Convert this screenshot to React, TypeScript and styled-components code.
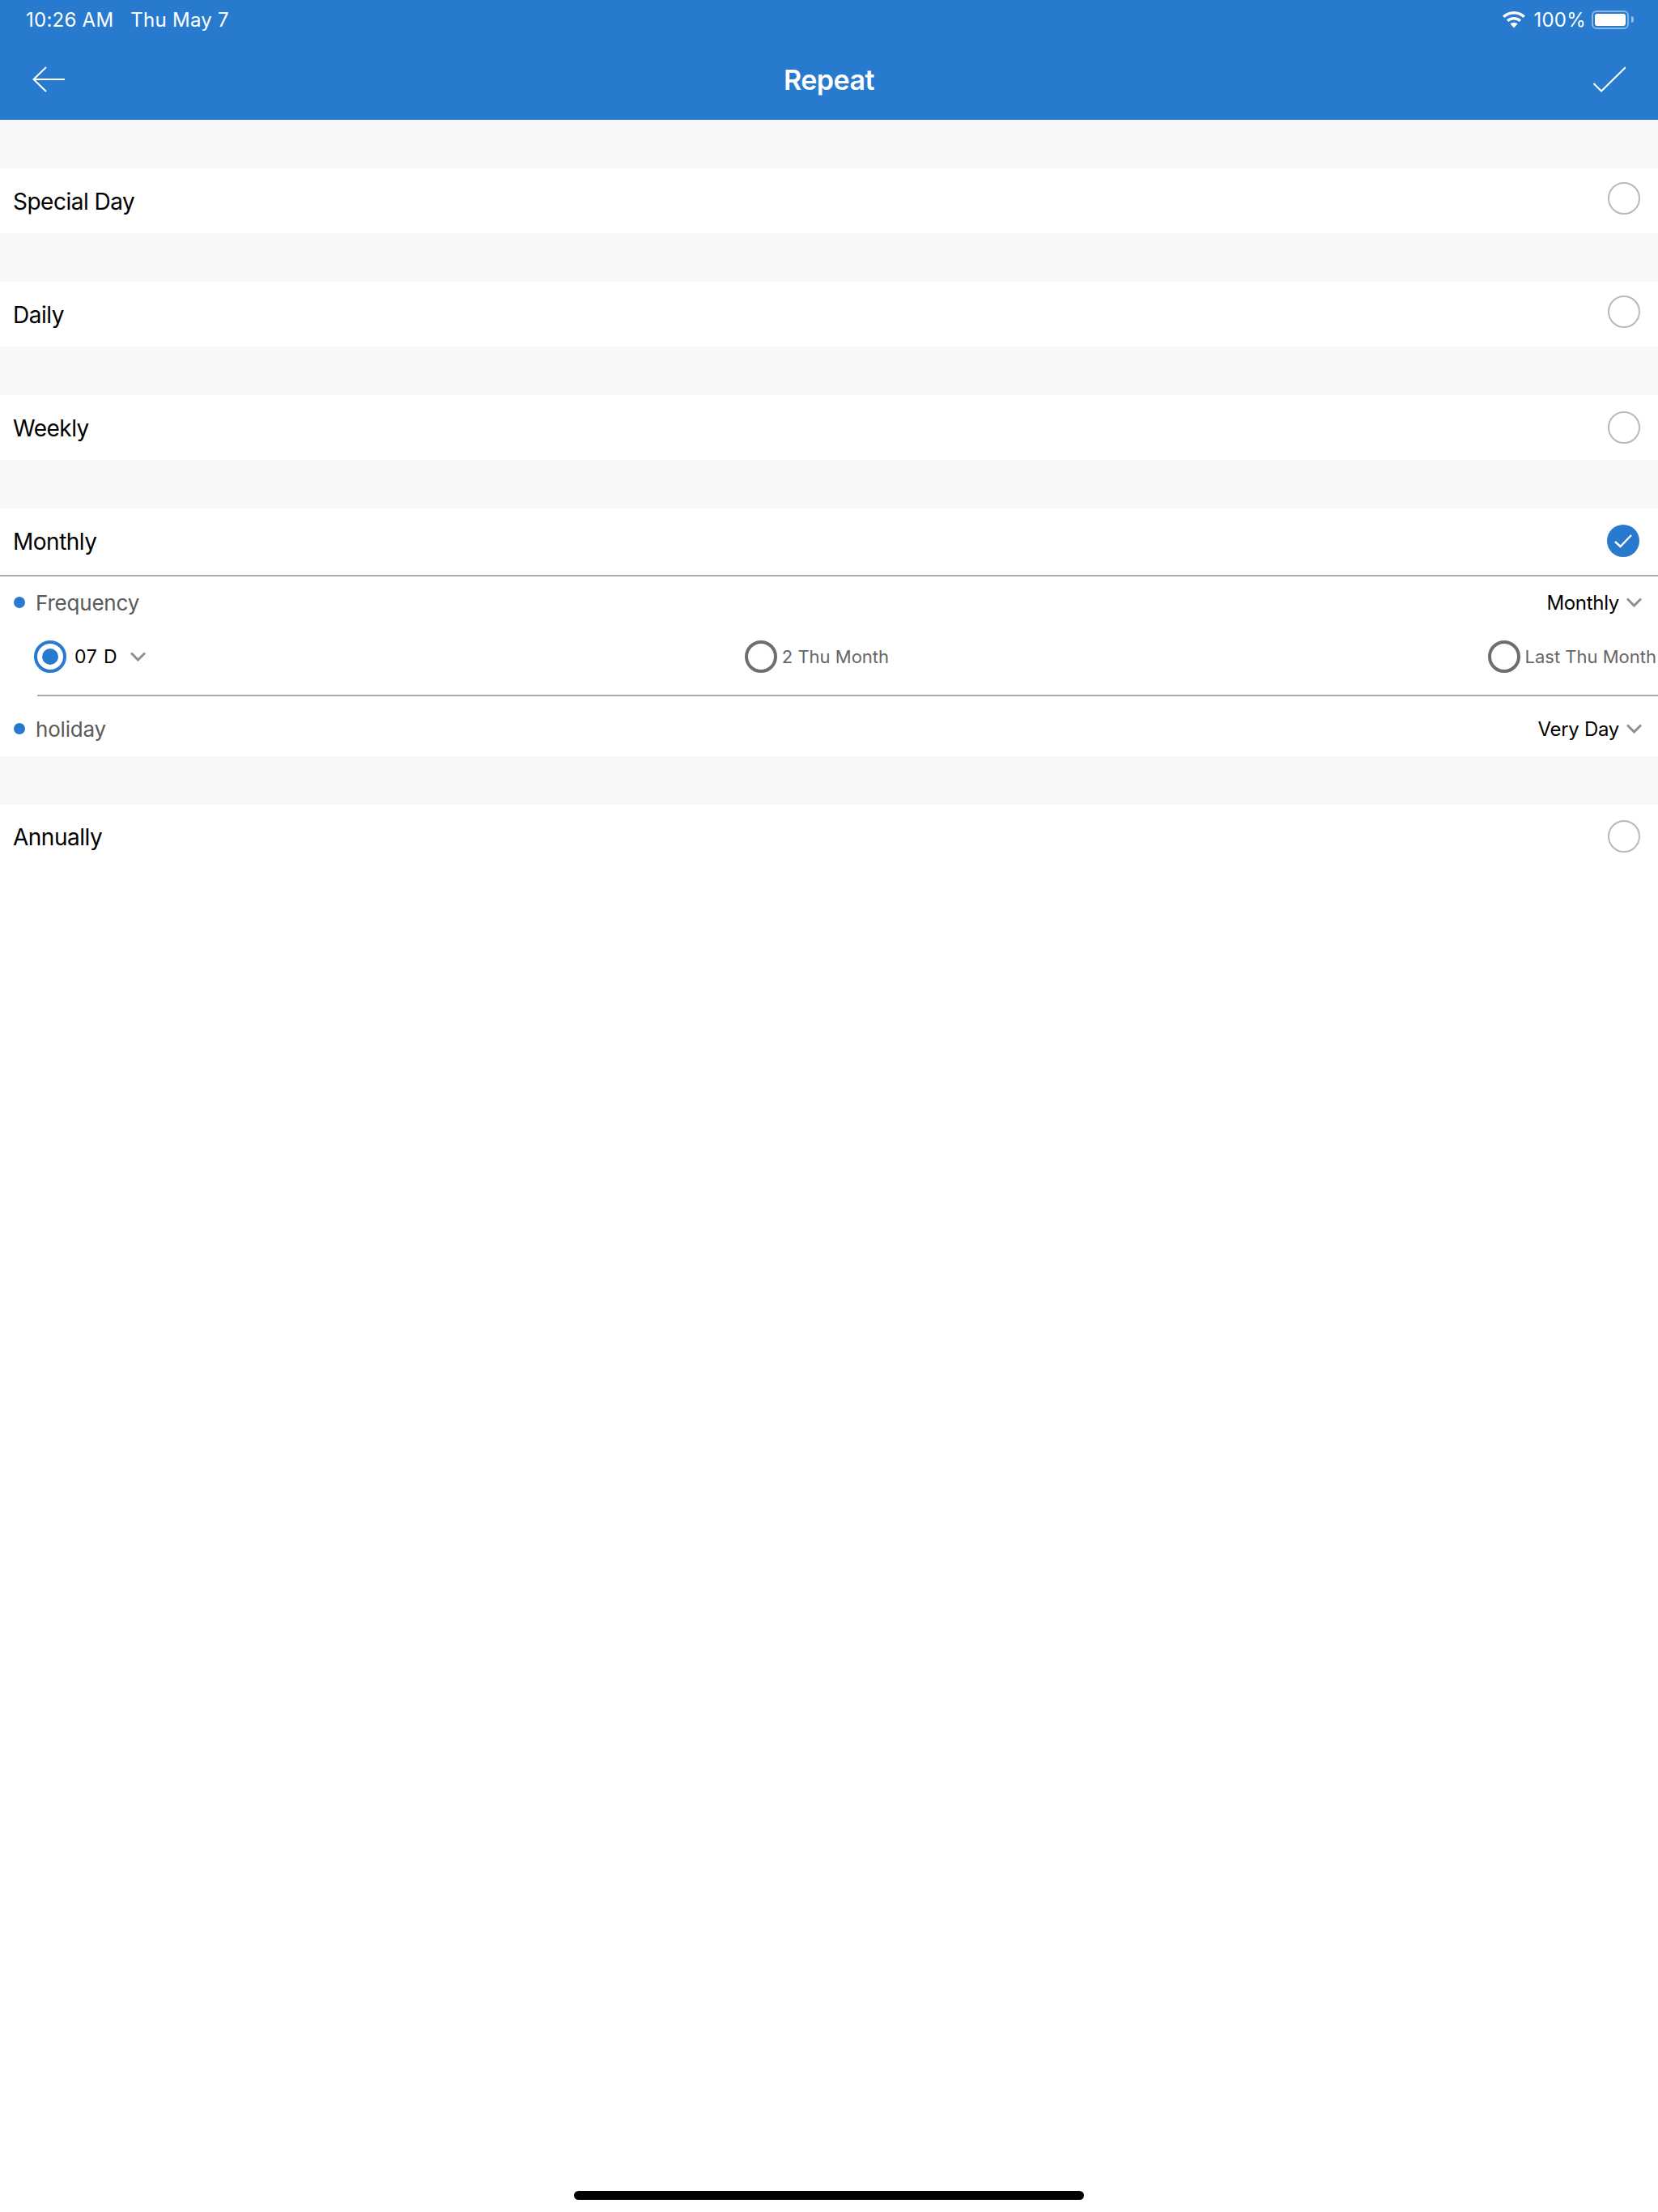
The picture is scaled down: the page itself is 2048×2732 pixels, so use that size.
import * as React from 'react';
import styled, { createGlobalStyle } from 'styled-components';

const BLUE = '#277acd';

const GlobalStyle = createGlobalStyle`
    html, body {
        margin: 0;
        padding: 0;
        background: #ffffff;
        font-family: Inter, "Noto Sans", "Liberation Sans", sans-serif;
    }
`;

const Page = styled.div`
    width: 2048px;
    height: 2732px;
    display: flex;
    flex-direction: column;
    background: #ffffff;
    overflow: hidden;
`;

const Header = styled.header`
    height: 148px;
    background: ${BLUE};
    color: #ffffff;
    display: flex;
    flex-direction: column;
`;

const StatusBar = styled.div`
    height: 48px;
    padding: 0 30px 0 32px;
    display: flex;
    align-items: center;
    justify-content: space-between;
    font-size: 24px;
    letter-spacing: 0.25px;
`;

const StatusGroup = styled.div`
    display: flex;
    align-items: center;
`;

const StatusDate = styled.span`
    margin-left: 21px;
`;

const StatusPercent = styled.span`
    margin: 0 7px 0 10px;
`;

const Battery = styled.div`
    width: 46px;
    height: 23px;
    box-sizing: border-box;
    border: 2px solid rgba(255, 255, 255, 0.45);
    border-radius: 6px;
    padding: 2px;
    display: flex;
`;

const BatteryFill = styled.div`
    flex: 1;
    background: #ffffff;
    border-radius: 3px;
`;

const BatteryNub = styled.div`
    width: 3px;
    height: 8px;
    margin-left: 3px;
    border-radius: 0 3px 3px 0;
    background: rgba(255, 255, 255, 0.5);
`;

const NavBar = styled.div`
    height: 100px;
    padding: 0 40px;
    display: flex;
    align-items: center;
    justify-content: space-between;
`;

const NavTitle = styled.h1`
    margin: 0;
    font-size: 34px;
    font-weight: 600;
    letter-spacing: -0.5px;
`;

const Gap = styled.div`
    height: 60px;
    background: #f7f7f7;
`;

const OptionRow = styled.div<{ $tall?: boolean; $ruled?: boolean }>`
    height: ${(p) => (p.$tall ? 82 : 80)}px;
    padding: 0 22px 0 16px;
    display: flex;
    align-items: center;
    justify-content: space-between;
    background: #ffffff;
    ${(p) => (p.$ruled ? 'border-bottom: 2px solid #a9a9a9;' : '')}
`;

const OptionLabel = styled.span<{ $drop: number }>`
    font-size: 28px;
    letter-spacing: -0.5px;
    color: #000000;
    padding-top: ${(p) => p.$drop}px;
`;

const EmptyCircle = styled.div<{ $lift: number }>`
    width: 40px;
    height: 40px;
    box-sizing: border-box;
    border: 2px solid #b9b9b9;
    border-radius: 50%;
    margin-bottom: ${(p) => p.$lift}px;
`;

const CheckedCircle = styled.div`
    width: 40px;
    height: 40px;
    margin: 0 1px 2px 0;
    border-radius: 50%;
    background: ${BLUE};
    display: flex;
    align-items: center;
    justify-content: center;
`;

const SettingRow = styled.div<{ $height: number; $top?: number }>`
    height: ${(p) => p.$height}px;
    box-sizing: border-box;
    padding: ${(p) => p.$top || 0}px 20px 0 17px;
    display: flex;
    align-items: center;
    justify-content: space-between;
`;

const SettingName = styled.div`
    display: flex;
    align-items: center;
    font-size: 26px;
    letter-spacing: -0.2px;
    color: #5a5a5a;
`;

const Dot = styled.span`
    width: 14px;
    height: 14px;
    border-radius: 50%;
    background: ${BLUE};
    margin-right: 13px;
`;

const SettingValue = styled.div`
    display: flex;
    align-items: center;
    font-size: 24px;
    letter-spacing: -0.3px;
    color: #000000;
`;

const Chevron = styled.svg<{ $gap: number }>`
    width: 19px;
    height: 12px;
    margin-left: ${(p) => p.$gap}px;
    fill: none;
    stroke: #8f8f8f;
    stroke-width: 3;
`;

const RadioLine = styled.div`
    height: 82px;
    box-sizing: border-box;
    padding: 0 2px 12px 42px;
    display: flex;
    align-items: center;
    justify-content: space-between;
`;

const RadioItem = styled.div`
    display: flex;
    align-items: center;
`;

const Radio = styled.div<{ $on?: boolean }>`
    width: 40px;
    height: 40px;
    box-sizing: border-box;
    border: 4px solid ${(p) => (p.$on ? BLUE : '#6e6e6e')};
    border-radius: 50%;
    display: flex;
    align-items: center;
    justify-content: center;
`;

const RadioDot = styled.div`
    width: 20px;
    height: 20px;
    border-radius: 50%;
    background: ${BLUE};
`;

const RadioText = styled.span<{ $on?: boolean }>`
    margin-left: ${(p) => (p.$on ? 10 : 6)}px;
    font-size: ${(p) => (p.$on ? 23 : 22)}px;
    letter-spacing: ${(p) => (p.$on ? 0.8 : 0)}px;
    color: ${(p) => (p.$on ? '#000000' : '#666666')};
`;

const InsetRule = styled.div`
    height: 2px;
    margin-left: 46px;
    background: #a9a9a9;
`;

const HomeBar = styled.div`
    width: 630px;
    height: 11px;
    margin: auto auto 15px;
    border-radius: 6px;
    background: #000000;
`;

const ChevronDown: React.FunctionComponent<{ gap: number }> = ({ gap }) => (
    <Chevron $gap={gap} viewBox="0 0 19 12">
        <path d="M1 1.5 L9.5 10 L18 1.5" />
    </Chevron>
);

const Option: React.FunctionComponent<{ label: string; lift: number; drop: number }> = ({ label, lift, drop }) => (
    <>
        <Gap />
        <OptionRow>
            <OptionLabel $drop={drop}>{label}</OptionLabel>
            <EmptyCircle $lift={lift} />
        </OptionRow>
    </>
);

const App: React.FunctionComponent = () => (
    <Page>
        <GlobalStyle />
        <Header>
            <StatusBar>
                <StatusGroup>
                    <span>10:26 AM</span>
                    <StatusDate>Thu May 7</StatusDate>
                </StatusGroup>
                <StatusGroup>
                    <svg width="28" height="21" viewBox="0 0 28 21" fill="#ffffff">
                        <path d="M14 0 C19.4 0 24.3 2.1 28 5.6 L25.6 8.1 C22.6 5.2 18.5 3.4 14 3.4 C9.5 3.4 5.4 5.2 2.4 8.1 L0 5.6 C3.7 2.1 8.6 0 14 0 Z" />
                        <path d="M14 7 C17.5 7 20.7 8.4 23.1 10.6 L20.7 13.1 C18.9 11.5 16.6 10.4 14 10.4 C11.4 10.4 9.1 11.5 7.3 13.1 L4.9 10.6 C7.3 8.4 10.5 7 14 7 Z" />
                        <path d="M14 13.8 C15.8 13.8 17.3 14.5 18.5 15.6 L14 20.4 L9.5 15.6 C10.7 14.5 12.2 13.8 14 13.8 Z" />
                    </svg>
                    <StatusPercent>100%</StatusPercent>
                    <Battery>
                        <BatteryFill />
                    </Battery>
                    <BatteryNub />
                </StatusGroup>
            </StatusBar>
            <NavBar>
                <svg width="40" height="32" viewBox="0 0 40 32" fill="none" stroke="#ffffff" strokeWidth="2">
                    <path d="M40 16 H1.5 M17 1 L1.5 16 L17 31" />
                </svg>
                <NavTitle>Repeat</NavTitle>
                <svg width="40" height="32" viewBox="0 0 40 32" fill="none" stroke="#ffffff" strokeWidth="2">
                    <path d="M0.5 21 L10 30.5 L40 1" />
                </svg>
            </NavBar>
        </Header>
        <Option label="Special Day" lift={6} drop={2} />
        <Option label="Daily" lift={6} drop={2} />
        <Option label="Weekly" lift={0} drop={1} />
        <Gap />
        <OptionRow $tall $ruled>
            <OptionLabel $drop={0}>Monthly</OptionLabel>
            <CheckedCircle>
                <svg width="22" height="18" viewBox="0 0 22 18" fill="none" stroke="#ffffff" strokeWidth="2.4">
                    <path d="M1 10 L7.5 16 L21 2" />
                </svg>
            </CheckedCircle>
        </OptionRow>
        <SettingRow $height={64}>
            <SettingName>
                <Dot />
                Frequency
            </SettingName>
            <SettingValue>
                Monthly
                <ChevronDown gap={9} />
            </SettingValue>
        </SettingRow>
        <RadioLine>
            <RadioItem>
                <Radio $on>
                    <RadioDot />
                </Radio>
                <RadioText $on>07 D</RadioText>
                <ChevronDown gap={16} />
            </RadioItem>
            <RadioItem>
                <Radio />
                <RadioText>2 Thu Month</RadioText>
            </RadioItem>
            <RadioItem>
                <Radio />
                <RadioText>Last Thu Month</RadioText>
            </RadioItem>
        </RadioLine>
        <InsetRule />
        <SettingRow $height={74} $top={6}>
            <SettingName>
                <Dot />
                holiday
            </SettingName>
            <SettingValue>
                Very Day
                <ChevronDown gap={9} />
            </SettingValue>
        </SettingRow>
        <Option label="Annually" lift={3} drop={0} />
        <HomeBar />
    </Page>
);

export default App;
